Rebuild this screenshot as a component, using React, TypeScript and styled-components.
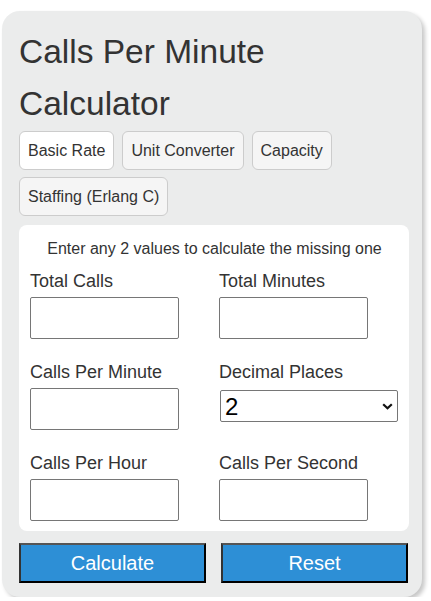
import React, { useState } from 'react';
import styled, { createGlobalStyle } from 'styled-components';

const GlobalStyle = createGlobalStyle`
    html, body {
        margin: 0;
        padding: 0;
        background: #ffffff;
    }
    body {
        font-family: 'Liberation Sans', Arial, sans-serif;
        color: #333333;
    }
    * {
        box-sizing: border-box;
    }
`;

const Card = styled.div`
    margin: 11px 0 0 2px;
    width: 420px;
    padding: 15px 13px 14px 17px;
    background: #ebecec;
    border-radius: 18px;
    box-shadow: 3px 3px 4px rgba(0, 0, 0, 0.22);
`;

const Title = styled.h1`
    margin: 0 0 1px;
    max-width: 330px;
    font-size: 33.5px;
    font-weight: 400;
    line-height: 52px;
    color: #333333;
`;

const Tabs = styled.div`
    display: flex;
    flex-wrap: wrap;
    gap: 7px 8px;
`;

const Tab = styled.button<{ $active?: boolean }>`
    font-family: inherit;
    font-size: 16px;
    line-height: 19px;
    padding: 9px 8px;
    color: #333333;
    background: ${({ $active }) => ($active ? '#ffffff' : '#f5f5f5')};
    border: 1px solid #cccccc;
    border-radius: 6px;
    cursor: pointer;
`;

const Panel = styled.div`
    margin-top: 9px;
    background: #ffffff;
    border-radius: 8px;
    padding: 15px 10px 10px 11px;
`;

const Intro = styled.p`
    margin: 0 0 13px;
    font-size: 16px;
    line-height: 18px;
    text-align: center;
    color: #333333;
`;

const Grid = styled.div`
    display: grid;
    grid-template-columns: 179px 179px;
    column-gap: 10px;
    row-gap: 23px;
`;

const Field = styled.div`
    display: flex;
    flex-direction: column;
    align-items: flex-start;
`;

const Label = styled.label`
    font-size: 18px;
    line-height: 20px;
    margin-bottom: 6px;
    color: #333333;
`;

const Input = styled.input`
    width: 149px;
    height: 42px;
    padding: 0 6px;
    font-family: inherit;
    font-size: 18px;
    border: 1px solid #767676;
    border-radius: 2px;
    background: #ffffff;
`;

const SelectWrap = styled.div`
    position: relative;
    margin: 2px 0 0 1px;
    width: 178px;
`;

const Select = styled.select`
    appearance: none;
    width: 100%;
    height: 32px;
    padding: 0 4px;
    font-family: inherit;
    font-size: 24px;
    color: #000000;
    background: #ffffff;
    border: 1px solid #767676;
    border-radius: 2px;
`;

const Chevron = styled.svg`
    position: absolute;
    right: 5px;
    top: 13px;
    pointer-events: none;
`;

const Actions = styled.div`
    margin-top: 12px;
    display: grid;
    grid-template-columns: 1fr 1fr;
    column-gap: 15px;
    width: 389px;
`;

const ActionButton = styled.button`
    height: 40px;
    font-family: inherit;
    font-size: 20px;
    color: #ffffff;
    background: #2d8fd6;
    border-style: solid;
    border-width: 2px;
    border-color: #555555 #000000 #000000 #333333;
    cursor: pointer;
`;

const fields = [
    { id: 'calls', label: 'Total Calls' },
    { id: 'minutes', label: 'Total Minutes' },
    { id: 'cpm', label: 'Calls Per Minute' },
    { id: 'decimals', label: 'Decimal Places' },
    { id: 'cph', label: 'Calls Per Hour' },
    { id: 'cps', label: 'Calls Per Second' },
];

const tabs = ['Basic Rate', 'Unit Converter', 'Capacity', 'Staffing (Erlang C)'];

export default function App() {
    const [active, setActive] = useState(0);
    const [decimals, setDecimals] = useState('2');

    return (
        <>
            <GlobalStyle />
            <Card>
                <Title>Calls Per Minute Calculator</Title>
                <Tabs>
                    {tabs.map((t, i) => (
                        <Tab key={t} $active={i === active} onClick={() => setActive(i)}>
                            {t}
                        </Tab>
                    ))}
                </Tabs>
                <Panel>
                    <Intro>Enter any 2 values to calculate the missing one</Intro>
                    <Grid>
                        {fields.map(f => (
                            <Field key={f.id}>
                                <Label htmlFor={f.id}>{f.label}</Label>
                                {f.id === 'decimals' ? (
                                    <SelectWrap>
                                        <Select
                                            id={f.id}
                                            value={decimals}
                                            onChange={e => setDecimals(e.target.value)}
                                        >
                                            {[0, 1, 2, 3, 4, 5, 6].map(n => (
                                                <option key={n} value={String(n)}>
                                                    {n}
                                                </option>
                                            ))}
                                        </Select>
                                        <Chevron width="11" height="7" viewBox="0 0 11 7">
                                            <path
                                                d="M1.2 1.2 L5.5 5.3 L9.8 1.2"
                                                fill="none"
                                                stroke="#111"
                                                strokeWidth="2.2"
                                            />
                                        </Chevron>
                                    </SelectWrap>
                                ) : (
                                    <Input id={f.id} type="text" />
                                )}
                            </Field>
                        ))}
                    </Grid>
                </Panel>
                <Actions>
                    <ActionButton>Calculate</ActionButton>
                    <ActionButton>Reset</ActionButton>
                </Actions>
            </Card>
        </>
    );
}
